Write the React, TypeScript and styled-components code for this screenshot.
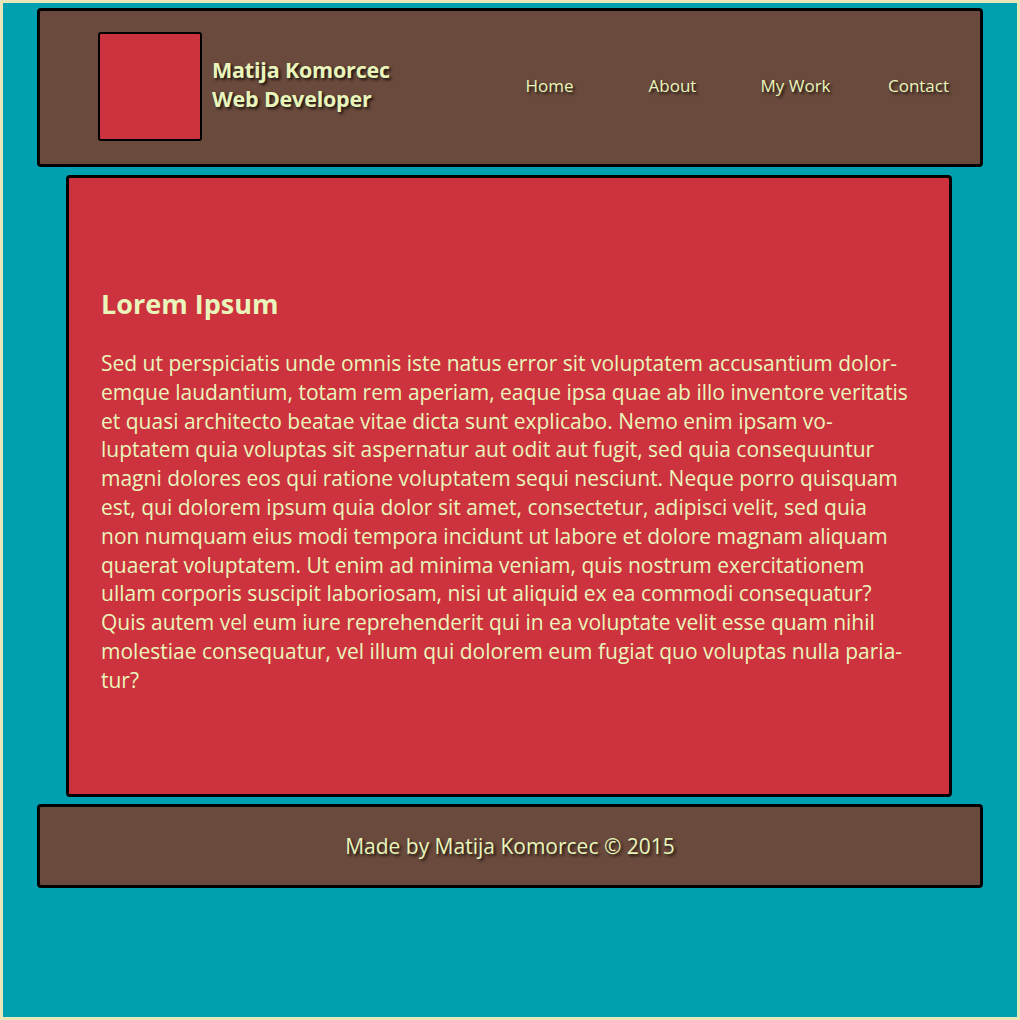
import { FC } from "react";
import styled, { createGlobalStyle } from "styled-components";

const cream = "#eaf5bc";
const teal = "#00a0b0";
const brown = "#6a4a3c";
const red = "#cc333f";

const navItems = ["Home", "About", "My Work", "Contact"];

const lines = [
  "Sed ut perspiciatis unde omnis iste natus error sit voluptatem accusantium dolor-",
  "emque laudantium, totam rem aperiam, eaque ipsa quae ab illo inventore veritatis",
  "et quasi architecto beatae vitae dicta sunt explicabo. Nemo enim ipsam vo-",
  "luptatem quia voluptas sit aspernatur aut odit aut fugit, sed quia consequuntur",
  "magni dolores eos qui ratione voluptatem sequi nesciunt. Neque porro quisquam",
  "est, qui dolorem ipsum quia dolor sit amet, consectetur, adipisci velit, sed quia",
  "non numquam eius modi tempora incidunt ut labore et dolore magnam aliquam",
  "quaerat voluptatem. Ut enim ad minima veniam, quis nostrum exercitationem",
  "ullam corporis suscipit laboriosam, nisi ut aliquid ex ea commodi consequatur?",
  "Quis autem vel eum iure reprehenderit qui in ea voluptate velit esse quam nihil",
  "molestiae consequatur, vel illum qui dolorem eum fugiat quo voluptas nulla paria-",
  "tur?",
];

const App: FC = (): JSX.Element => {
  return (
    <>
      <GlobalStyle />
      <Page>
        <Header>
          <Brand>
            <Logo />
            <Title>
              Matija Komorcec
              <br />
              Web Developer
            </Title>
          </Brand>
          <Nav>
            {navItems.map((item) => (
              <NavLink key={item} href="#">
                {item}
              </NavLink>
            ))}
          </Nav>
        </Header>

        <Main>
          <Heading>Lorem Ipsum</Heading>
          <Paragraph>
            {lines.map((line) => (
              <Line key={line}>{line}</Line>
            ))}
          </Paragraph>
        </Main>

        <Footer>
          <FooterText>Made by Matija Komorcec © 2015</FooterText>
        </Footer>
      </Page>
    </>
  );
};

export default App;

const GlobalStyle = createGlobalStyle`
  html, body {
    margin: 0;
    padding: 0;
  }
  body {
    font-family: "Open Sans", "Liberation Sans", sans-serif;
  }
`;

const Page = styled.div`
  box-sizing: border-box;
  width: 1020px;
  height: 1020px;
  border: 3px solid #e8e7b9;
  background: ${teal};
  padding: 5px 34px 0;
  display: flex;
  flex-direction: column;
  align-items: flex-start;
`;

const Header = styled.header`
  box-sizing: border-box;
  width: 946px;
  height: 159px;
  background: ${brown};
  border: 3px solid #000;
  border-radius: 4px;
  display: flex;
  align-items: flex-start;
  justify-content: space-between;
  padding: 21px 0 0 58px;
`;

const Brand = styled.div`
  display: flex;
  align-items: center;
  gap: 10px;
`;

const Logo = styled.div`
  box-sizing: border-box;
  width: 104px;
  height: 109px;
  background: ${red};
  border: 2px solid #000;
  border-radius: 3px;
`;

const Title = styled.h1`
  margin: -6px 0 0;
  font-size: 21.5px;
  line-height: 29px;
  font-weight: 700;
  letter-spacing: -0.2px;
  color: ${cream};
  text-shadow: 2px 2px 3px rgba(0, 0, 0, 0.75);
`;

const Nav = styled.nav`
  display: grid;
  grid-template-columns: repeat(4, 123px);
  margin-top: 42px;
`;

const NavLink = styled.a`
  text-align: center;
  font-size: 17px;
  line-height: 24px;
  color: ${cream};
  text-decoration: none;
  text-shadow: 2px 2px 3px rgba(0, 0, 0, 0.75);
`;

const Main = styled.main`
  box-sizing: border-box;
  width: 886px;
  height: 622px;
  margin: 8px 0 0 29px;
  background: ${red};
  border: 3px solid #000;
  border-radius: 4px;
  padding: 108px 32px 0;
  color: ${cream};
`;

const Heading = styled.h2`
  margin: 0 0 27px;
  font-size: 27px;
  line-height: 36px;
  font-weight: 700;
`;

const Paragraph = styled.p`
  margin: 0;
  font-size: 21px;
  line-height: 28.8px;
`;

const Line = styled.span`
  display: block;
  white-space: nowrap;
`;

const Footer = styled.footer`
  box-sizing: border-box;
  width: 946px;
  height: 84px;
  margin-top: 7px;
  background: ${brown};
  border: 3px solid #000;
  border-radius: 4px;
  display: flex;
  align-items: center;
  justify-content: center;
`;

const FooterText = styled.p`
  margin: 0;
  font-size: 21px;
  color: ${cream};
  text-shadow: 2px 2px 3px rgba(0, 0, 0, 0.75);
`;
